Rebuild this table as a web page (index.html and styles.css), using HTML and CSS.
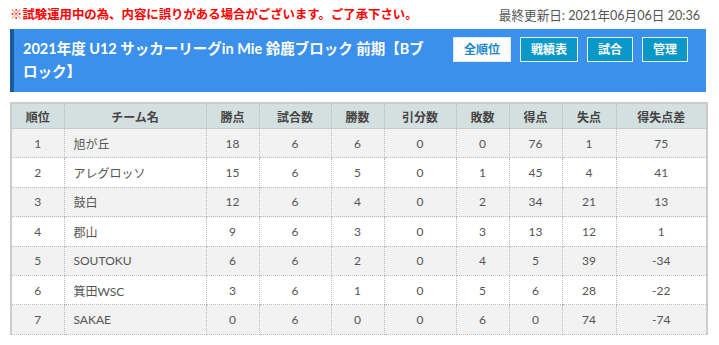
FILE: index.html
```html
<!DOCTYPE html>
<html lang="ja">
<head>
<meta charset="utf-8">
<link rel="stylesheet" href="styles.css">
</head>
<body>
<div class="page">
  <div class="topbar">
    <p class="notice">※試験運用中の為、内容に誤りがある場合がございます。ご了承下さい。</p>
    <p class="updated">最終更新日: 2021年06月06日 20:36</p>
  </div>
  <div class="header">
    <h1 class="title">2021年度 U12 サッカーリーグin Mie 鈴鹿ブロック 前期【Bブロック】</h1>
    <nav class="buttons">
      <a class="btn active">全順位</a>
      <a class="btn">戦績表</a>
      <a class="btn">試合</a>
      <a class="btn">管理</a>
    </nav>
  </div>
  <table class="standings">
    <colgroup>
      <col class="c53"><col class="c142"><col class="c53"><col class="c72"><col class="c53"><col class="c72"><col class="c53"><col class="c53"><col class="c54"><col class="c91">
    </colgroup>
    <thead>
      <tr><th>順位</th><th>チーム名</th><th>勝点</th><th>試合数</th><th>勝数</th><th>引分数</th><th>敗数</th><th>得点</th><th>失点</th><th>得失点差</th></tr>
    </thead>
    <tbody>
      <tr><td>1</td><td class="team">旭が丘</td><td>18</td><td>6</td><td>6</td><td>0</td><td>0</td><td>76</td><td>1</td><td>75</td></tr>
      <tr><td>2</td><td class="team">アレグロッソ</td><td>15</td><td>6</td><td>5</td><td>0</td><td>1</td><td>45</td><td>4</td><td>41</td></tr>
      <tr><td>3</td><td class="team">鼓白</td><td>12</td><td>6</td><td>4</td><td>0</td><td>2</td><td>34</td><td>21</td><td>13</td></tr>
      <tr><td>4</td><td class="team">郡山</td><td>9</td><td>6</td><td>3</td><td>0</td><td>3</td><td>13</td><td>12</td><td>1</td></tr>
      <tr><td>5</td><td class="team">SOUTOKU</td><td>6</td><td>6</td><td>2</td><td>0</td><td>4</td><td>5</td><td>39</td><td>-34</td></tr>
      <tr><td>6</td><td class="team">箕田WSC</td><td>3</td><td>6</td><td>1</td><td>0</td><td>5</td><td>6</td><td>28</td><td>-22</td></tr>
      <tr><td>7</td><td class="team">SAKAE</td><td>0</td><td>6</td><td>0</td><td>0</td><td>6</td><td>0</td><td>74</td><td>-74</td></tr>
    </tbody>
  </table>
</div>
</body>
</html>
```

FILE: styles.css
```css
html, body {
  margin: 0;
  padding: 0;
  background: #fff;
}
body {
  font-family: "Lato", "Noto Sans CJK JP", sans-serif;
  color: #555;
}
.page {
  width: 696px;
  margin-left: 10px;
}
.topbar {
  display: flex;
  justify-content: space-between;
  align-items: center;
  height: 29px;
}
.notice {
  margin: 0;
  color: #f00;
  font-weight: bold;
  font-size: 12.4px;
  line-height: 16px;
  padding-top: 1px;
}
.updated {
  margin: 0 6px 0 0;
  color: #555;
  font-size: 12.6px;
  line-height: 16px;
  padding-top: 2px;
}
.header {
  display: flex;
  justify-content: space-between;
  align-items: flex-start;
  background: #3a90ea;
  border-left: 4px solid #1a5d9e;
  padding: 8px 18px 9px 9px;
  height: 46px;
}
.title {
  margin: 0;
  flex: 0 0 405px;
  color: #fff;
  font-size: 14.5px;
  font-weight: bold;
  line-height: 23px;
}
.buttons {
  display: flex;
  gap: 9px;
}
.btn {
  display: block;
  height: 23px;
  line-height: 23px;
  padding: 0 10px;
  border: 1px solid #e8f2fb;
  background: #0a98c9;
  color: #fff;
  font-size: 12px;
  font-weight: bold;
  text-align: center;
}
.btn.active {
  background: #fff;
  color: #1a86c8;
  border-color: #dfe9f2;
  padding: 0 10px;
}
.c53 { width: 53px; }
.c54 { width: 54px; }
.c72 { width: 72px; }
.c91 { width: 91px; }
.c142 { width: 142px; }
.standings {
  margin-top: 10px;
  width: 696px;
  border-collapse: collapse;
  table-layout: fixed;
  font-size: 12px;
  border-top: 2px solid #ccc;
  border-left: 2px solid #ccc;
  border-right: 2px solid #ccc;
  border-bottom: 1px dotted #bbb;
}
.standings th {
  background: #d4dfe0;
  color: #444;
  font-weight: bold;
  height: 24px;
  padding: 0;
  text-align: center;
  border-left: 1px dotted #bbb;
  border-bottom: 1px solid #ccc;
}
.standings td {
  height: 28.4px;
  padding: 0;
  text-align: center;
  border: 1px dotted #bbb;
}
.standings tbody tr:nth-child(odd) td {
  background: #f2f2f2;
}
.standings tbody tr:nth-child(even) td {
  background: #fff;
}
.standings td.team {
  text-align: left;
  padding-left: 9px;
}
```
